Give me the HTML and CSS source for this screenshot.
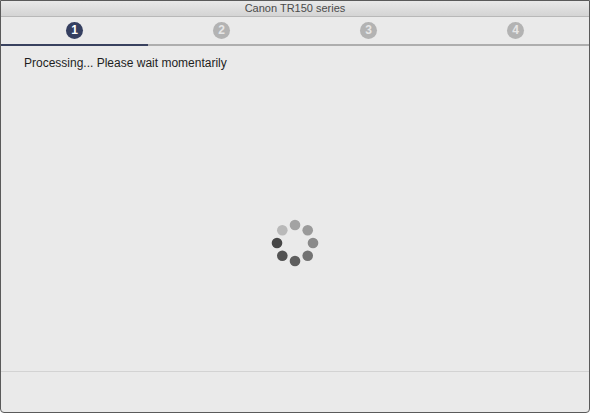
FILE: index.html
```html
<!DOCTYPE html>
<html lang="en">
<head>
<meta charset="UTF-8">
<title>Canon TR150 series</title>
<link rel="stylesheet" href="styles.css">
</head>
<body>
    <div class="window">
        <div class="titlebar">Canon TR150 series</div>
        <ol class="steps">
            <li class="step active"><span class="num">1</span></li>
            <li class="step"><span class="num">2</span></li>
            <li class="step"><span class="num">3</span></li>
            <li class="step"><span class="num">4</span></li>
        </ol>
        <main class="content">
            <p class="message">Processing... Please wait momentarily</p>
            <div class="spinner">
                <svg width="48" height="48" viewBox="0 0 48 48">
                    <circle cx="24" cy="6" r="5.3" fill="#a3a3a3"/>
                    <circle cx="36.7" cy="11.3" r="5.3" fill="#9a9a9a"/>
                    <circle cx="42" cy="24" r="5.3" fill="#8a8a8a"/>
                    <circle cx="36.7" cy="36.7" r="5.3" fill="#727272"/>
                    <circle cx="24" cy="42" r="5.3" fill="#5e5e5e"/>
                    <circle cx="11.3" cy="36.7" r="5.3" fill="#535353"/>
                    <circle cx="6" cy="24" r="5.3" fill="#474747"/>
                    <circle cx="11.3" cy="11.3" r="5.3" fill="#b9b9b9"/>
                </svg>
            </div>
        </main>
        <footer class="footer"></footer>
    </div>
</body>
</html>
```

FILE: styles.css
```css
html,body{
    margin:0;
    padding:0;
    background:#fff;
}
body{
    font-family:"Liberation Sans",Helvetica,Arial,sans-serif;
}
.window{
    box-sizing:border-box;
    width:590px;
    height:413px;
    border:1px solid #5a5a5a;
    border-radius:0 0 4px 4px;
    background:#eaeaea;
    display:flex;
    flex-direction:column;
    overflow:hidden;
}
.titlebar{
    height:15px;
    line-height:15px;
    text-align:center;
    font-size:11px;
    color:#4b4b4b;
    background:linear-gradient(#e9e9e9,#d4d4d4);
    border-bottom:1px solid #b8b8b8;
}
.steps{
    display:flex;
    list-style:none;
    margin:0;
    padding:0;
}
.step{
    flex:1;
    display:flex;
    justify-content:center;
    padding:5px 0;
    border-bottom:2px solid #aeaeae;
}
.step.active{
    border-bottom-color:#39425f;
}
.num{
    width:17px;
    height:17px;
    border-radius:50%;
    background:#b3b3b3;
    color:#e6e6e6;
    font-size:12px;
    font-weight:bold;
    line-height:17px;
    text-align:center;
}
.step.active .num{
    background:#353f60;
    color:#fff;
}
.content{
    height:325px;
    padding:0 23px;
}
.message{
    margin:9px 0 0;
    font-size:12px;
    line-height:16px;
    color:#1e1e1e;
}
.spinner{
    display:flex;
    justify-content:center;
    margin-top:148px;
}
.spinner svg{
    display:block;
}
.footer{
    flex:1;
    border-top:1px solid #d3d3d3;
}
```
